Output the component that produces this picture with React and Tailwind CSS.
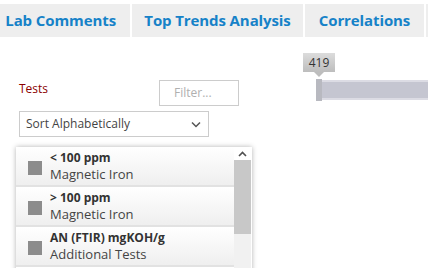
import React from 'react';

const tabs = [
  { label: 'Lab Comments', w: 'w-[130px] justify-end pr-[14px]' },
  { label: 'Top Trends Analysis', w: 'w-[171px] justify-center' },
  { label: 'Correlations', w: 'w-[119px] justify-center' },
];

const tests = [
  { name: '< 100 ppm', group: 'Magnetic Iron' },
  { name: '> 100 ppm', group: 'Magnetic Iron' },
  { name: 'AN (FTIR) mgKOH/g', group: 'Additional Tests' },
];

const TestRow = ({ test }) => (
  <div className="h-[40px] shrink-0 flex items-center bg-gradient-to-b from-white to-[#efefef] border-b-2 border-[#e2e2e2]">
    <div className="w-[14px] h-[14px] bg-[#8c8c8c] ml-[12px] mt-[4px]" />
    <div className="ml-[8px] flex flex-col leading-[16px]">
      <span className="text-[12px] font-bold text-[#333]">{test.name}</span>
      <span className="text-[13px] text-[#444]">{test.group}</span>
    </div>
  </div>
);

const App = () => {
  return (
    <div className="w-[428px] h-[268px] overflow-hidden bg-white font-['Open_Sans',sans-serif]">
      <div className="pt-[4px] flex gap-[2px]">
        {tabs.map((t) => (
          <div
            key={t.label}
            className={`${t.w} h-[33px] shrink-0 bg-[#eeeeee] flex items-center text-[15px] font-bold text-[#1682c8] tracking-[-0.1px]`}
          >
            {t.label}
          </div>
        ))}
        <div className="flex-1 h-[33px] bg-[#eeeeee]" />
      </div>

      <div className="flex">
        <div className="w-[260px] shrink-0 pt-[43px]">
          <div className="ml-[19px] w-[220px] flex justify-between items-start">
            <span className="text-[12px] text-[#8b0000] mt-[1px] leading-[16px]">Tests</span>
            <div className="w-[80px] h-[26px] border border-[#cccccc] flex items-center pl-[14px] text-[12px] text-[#b0b0b0]">
              Filter...
            </div>
          </div>
          <div className="ml-[19px] mt-[5px] w-[190px] h-[26px] border border-[#cccccc] flex items-center justify-between px-[6px] text-[12px] text-[#444]">
            <span>Sort Alphabetically</span>
            <svg width="10" height="7" viewBox="0 0 10 7" className="mr-[1px]">
              <path d="M1 1.5 L5 5.5 L9 1.5" fill="none" stroke="#555" strokeWidth="1.5" />
            </svg>
          </div>
          <div className="ml-[16px] mt-[10px] w-[236px] h-[130px] flex shadow-[0_0_5px_rgba(0,0,0,0.3)] bg-white">
            <div className="w-[218px] flex flex-col">
              {tests.map((t) => (
                <TestRow key={t.name + t.group} test={t} />
              ))}
              <div className="h-[10px] bg-white" />
            </div>
            <div className="w-[17px] flex flex-col bg-[#f1f1f1]">
              <div className="h-[13px] flex items-center justify-center bg-white">
                <svg width="9" height="6" viewBox="0 0 9 6">
                  <path d="M1 5 L4.5 1.5 L8 5" fill="none" stroke="#505050" strokeWidth="1.6" />
                </svg>
              </div>
              <div className="h-[74px] bg-[#c8c8c8]" />
            </div>
          </div>
        </div>

        <div className="flex-1 pt-[42px] pl-[56px]">
          <div className="relative h-[22px] flex items-center">
            <div className="absolute left-[-13px] top-[-26px] flex flex-col items-center">
              <div className="w-[32px] h-[19px] bg-gradient-to-b from-[#dcdcdc] to-[#bdbdbd] flex items-center justify-center text-[12px] text-[#333]">
                419
              </div>
              <div className="w-0 h-0 border-l-[5px] border-r-[5px] border-t-[5px] border-l-transparent border-r-transparent border-t-[#bdbdbd]" />
            </div>
            <div className="w-[6px] h-[22px] bg-[#b8b9c0] shrink-0" />
            <div className="flex-1 h-[20px] bg-[#c5c6d1] border-y-2 border-[#dcdce4]" />
          </div>
        </div>
      </div>
    </div>
  );
};

export default App;
